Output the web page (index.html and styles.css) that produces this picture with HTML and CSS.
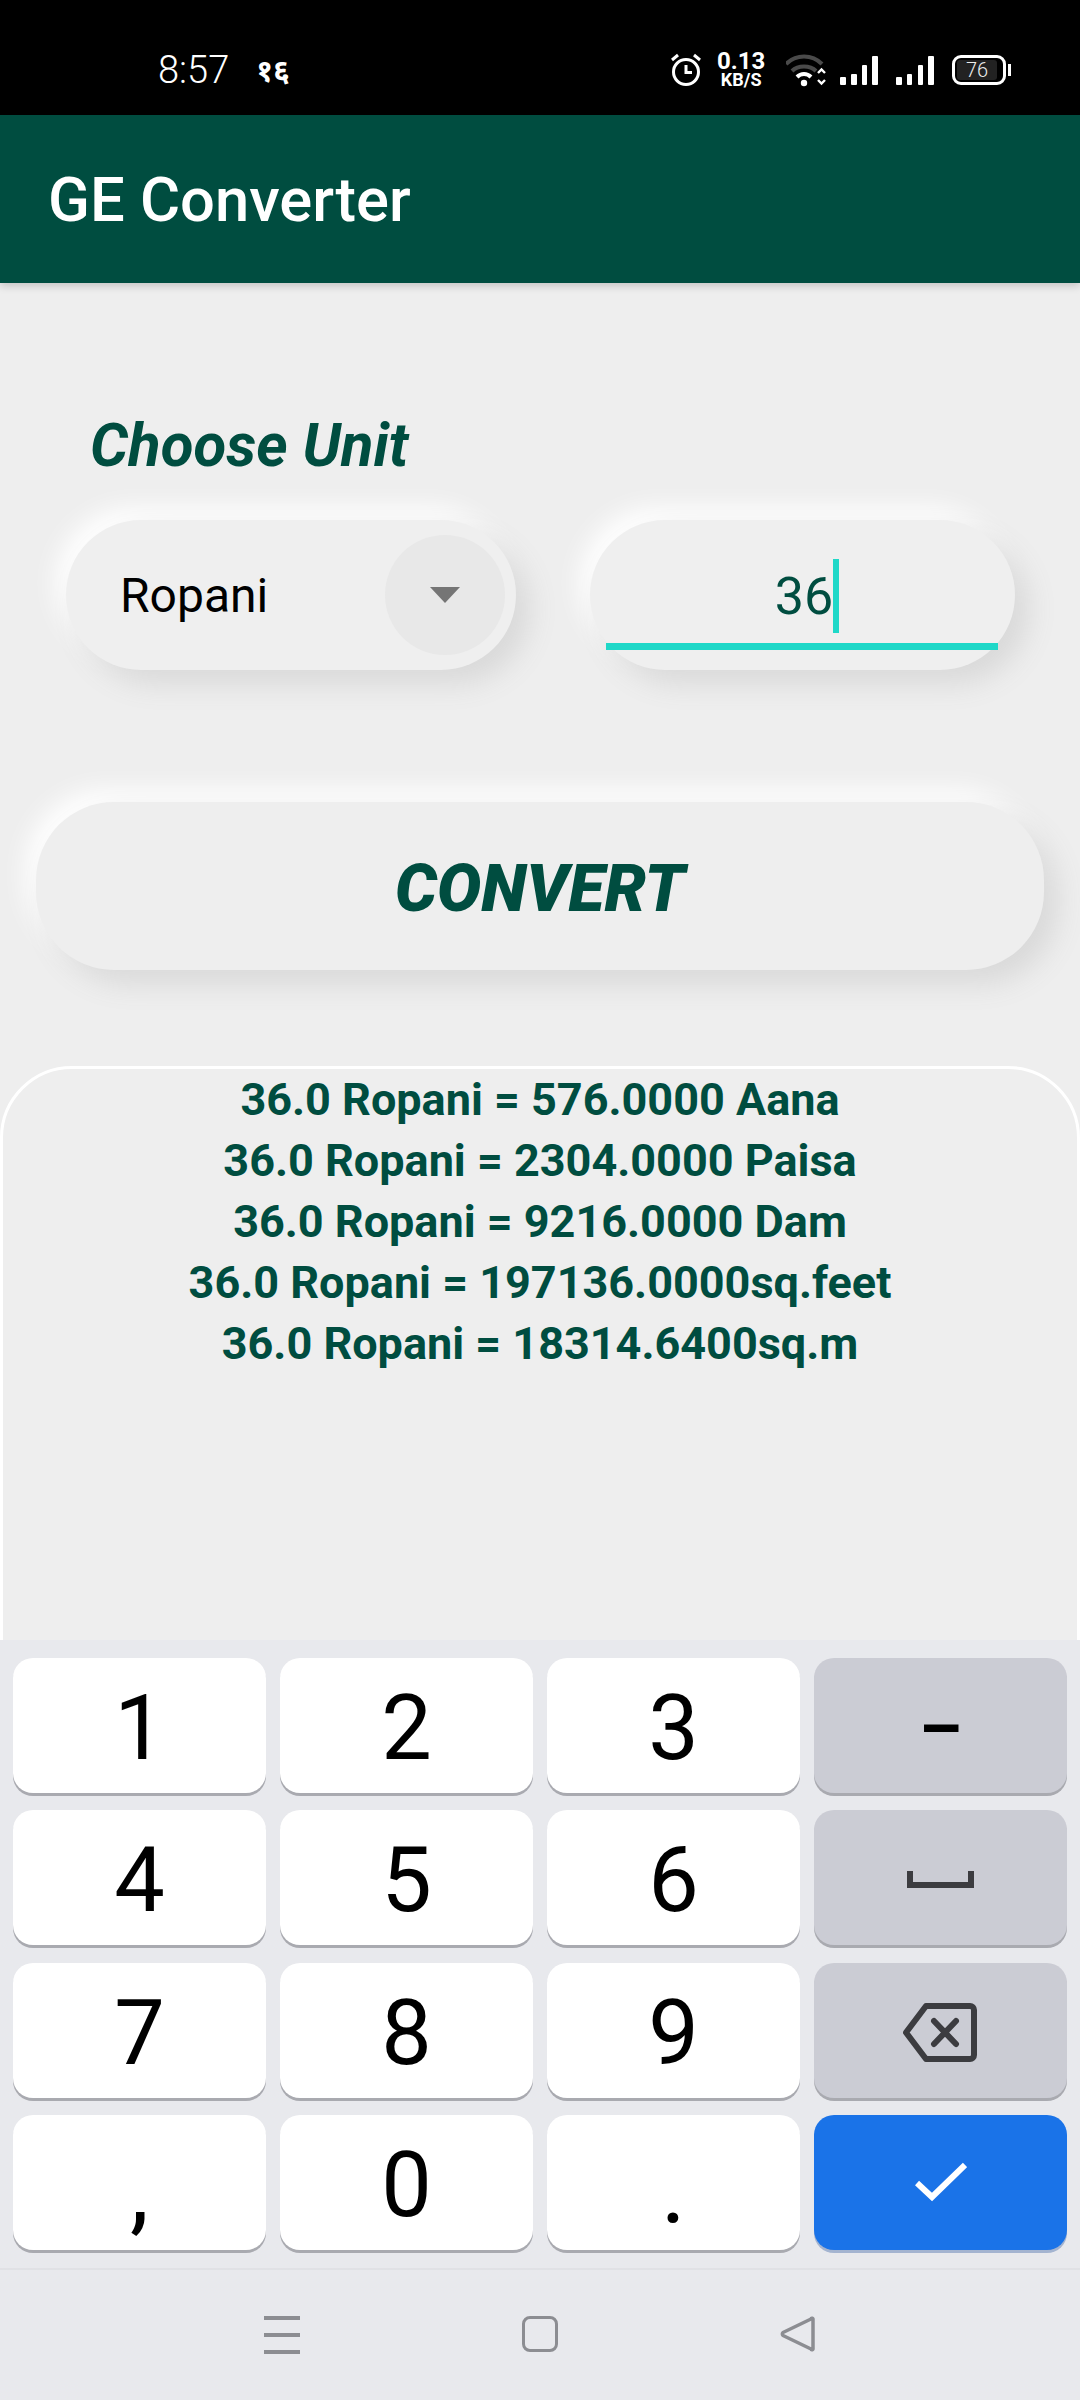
FILE: index.html
```html
<!DOCTYPE html>
<html lang="en">
<head>
  <meta charset="UTF-8" />
  <meta name="viewport" content="width=device-width, initial-scale=1.0"/>
  <title>GE Converter</title>
  <link rel="stylesheet" href="styles.css">
</head>
<body>

  <div class="status-bar">
    <div class="status-left">
      <span class="time">8:57</span>
      <span class="date-hi" lang="hi">१६</span>
    </div>
    <div class="status-right">
      <svg class="ic-alarm" width="32" height="34" viewBox="0 0 32 34">
        <circle cx="16" cy="19" r="12.5" fill="none" stroke="#fff" stroke-width="3"/>
        <path d="M16 12v7.5h6" fill="none" stroke="#fff" stroke-width="3"/>
        <path d="M2 7l6-5M30 7l-6-5" fill="none" stroke="#fff" stroke-width="3"/>
      </svg>
      <div class="speed">
        <span class="speed-num">0.13</span>
        <span class="speed-unit">KB/S</span>
      </div>
      <svg class="ic-wifi" width="42" height="34" viewBox="0 0 42 34">
        <path d="M1 11C11 1 27 1 37 11M7 18c6-6 18-6 24 0" transform="translate(-1 0)" fill="none" stroke="#4a4a4a" stroke-width="4"/>
        <path d="M12 24c4-4 10-4 14 0" transform="translate(-1 0)" fill="none" stroke="#fff" stroke-width="4"/>
        <circle cx="18" cy="30" r="3.2" fill="#fff"/>
        <path d="M32 20l3.5-3.5L39 20M32 27l3.5 3.5L39 27" fill="none" stroke="#fff" stroke-width="2.4"/>
      </svg>
      <div class="signal">
        <i class="b1"></i><i class="b2"></i><i class="b3"></i><i class="b4"></i>
      </div>
      <div class="signal">
        <i class="b1"></i><i class="b2"></i><i class="b3"></i><i class="b4"></i>
      </div>
      <div class="battery">
        <div class="battery-body"><span class="battery-fill">76</span></div>
        <div class="battery-nub"></div>
      </div>
    </div>
  </div>

  <header class="app-bar">GE Converter</header>

  <main class="content">
    <h2 class="choose-label">Choose Unit</h2>

    <div class="input-row">
      <div class="spinner">
        <span class="spinner-text">Ropani</span>
        <div class="spinner-btn"><div class="arrow"></div></div>
      </div>
      <div class="amount">
        <div class="amount-value"><span>36</span><div class="caret"></div></div>
        <div class="amount-line"></div>
      </div>
    </div>

    <button class="convert-btn">CONVERT</button>

    <section class="results">
      <p>36.0 Ropani = 576.0000 Aana</p>
      <p>36.0 Ropani = 2304.0000 Paisa</p>
      <p>36.0 Ropani = 9216.0000 Dam</p>
      <p>36.0 Ropani = 197136.0000sq.feet</p>
      <p>36.0 Ropani = 18314.6400sq.m</p>
    </section>
  </main>

  <div class="keyboard">
    <div class="key">1</div>
    <div class="key">2</div>
    <div class="key">3</div>
    <div class="key key-fn key-dash">–</div>
    <div class="key">4</div>
    <div class="key">5</div>
    <div class="key">6</div>
    <div class="key key-fn key-icon">
      <svg width="67" height="17" viewBox="0 0 67 17"><path d="M3 0v14h61V0" fill="none" stroke="#3c3c40" stroke-width="6"/></svg>
    </div>
    <div class="key">7</div>
    <div class="key">8</div>
    <div class="key">9</div>
    <div class="key key-fn key-icon">
      <svg class="ic-back" width="75" height="59" viewBox="0 0 75 59">
        <path d="M24 3h44a4 4 0 0 1 4 4v45a4 4 0 0 1-4 4H24L4 29.500z" fill="none" stroke="#3c3c40" stroke-width="6" stroke-linejoin="round"/>
        <path d="M32 18l22 23M54 18L32 41" fill="none" stroke="#3c3c40" stroke-width="6" stroke-linecap="round"/>
      </svg>
    </div>
    <div class="key key-mark">,</div>
    <div class="key">0</div>
    <div class="key key-mark">.</div>
    <div class="key key-ok">
      <svg width="52" height="41" viewBox="0 0 52 41"><path d="M2 21l15 14L50 3" fill="none" stroke="#fff" stroke-width="6"/></svg>
    </div>
  </div>

  <nav class="nav-bar">
    <div class="nav-menu"><i></i><i></i><i></i></div>
    <div class="nav-home"></div>
    <svg class="nav-back" width="36" height="36" viewBox="0 0 36 36">
      <path d="M33 3.500a1 1 0 0 0-2-.5L3 16.500a2 2 0 0 0 0 3L31 33a1 1 0 0 0 2-.5z" fill="none" stroke="#8c8d92" stroke-width="3.500" stroke-linejoin="round"/>
    </svg>
  </nav>

</body>
</html>
```

FILE: styles.css
```css
* {
  box-sizing: border-box;
}
body {
  margin: 0;
  width: 1080px;
  height: 2400px;
  overflow: hidden;
  display: flex;
  flex-direction: column;
  font-family: Roboto, "Liberation Sans", sans-serif;
  background: #eee;
}

/* status bar */
.status-bar {
  height: 115px;
  flex: none;
  background: #000;
  color: #fff;
  display: flex;
  justify-content: space-between;
  align-items: center;
  padding: 24px 69px 0 158px;
}
.status-left {
  display: flex;
  align-items: center;
  gap: 27px;
}
.time {
  font-size: 38px;
  font-weight: 300;
}
.date-hi {
  font-family: "Noto Sans", "Noto Sans Devanagari", sans-serif;
  font-size: 30px;
  font-weight: 700;
}
.status-right {
  display: flex;
  align-items: center;
  height: 34px;
}
.ic-alarm {
  margin: 0 16px 0 4px;
}
.speed {
  display: flex;
  flex-direction: column;
  align-items: center;
  font-weight: 700;
  line-height: 1;
  margin-right: 22px;
  width: 46px;
}
.speed-num {
  font-size: 24px;
  line-height: 20px;
}
.speed-unit {
  font-size: 18px;
  line-height: 17px;
}
.ic-wifi {
  margin-right: 12px;
}
.signal {
  display: flex;
  align-items: flex-end;
  gap: 5.2px;
  height: 30px;
  margin-right: 18px;
}
.signal i {
  display: block;
  width: 5.6px;
  background: #fff;
  border-radius: 1px;
}
.b1 { height: 8px; }
.b2 { height: 11px; }
.b3 { height: 20px; }
.b4 { height: 29px; }
.battery {
  display: flex;
  align-items: center;
  gap: 2px;
}
.battery-body {
  width: 54px;
  height: 30px;
  border: 3px solid #fff;
  border-radius: 9px;
  padding: 2px;
}
.battery-fill {
  display: block;
  height: 100%;
  width: 40px;
  background: #222;
  border-radius: 3px;
  color: #eee;
  font-size: 20px;
  font-weight: 300;
  line-height: 20px;
  text-align: center;
}
.battery-nub {
  width: 3px;
  height: 12px;
  background: #fff;
}

/* app bar */
.app-bar {
  height: 168px;
  flex: none;
  background: #004d40;
  color: #fff;
  font-size: 61.500px;
  font-weight: 500;
  display: flex;
  align-items: center;
  padding: 2px 0 0 48px;
  box-shadow: 0 3px 8px rgba(0,0,0,.18);
  position: relative;
}

/* main form */
.content {
  flex: 1;
  min-height: 0;
  overflow: hidden;
  display: flex;
  flex-direction: column;
}
.choose-label {
  margin: 130px 0 0 90px;
  font-size: 60px;
  line-height: 66px;
  font-weight: 700;
  font-style: italic;
  color: #004d40;
}
.input-row {
  display: flex;
  margin: 41px 0 0 66px;
  gap: 74px;
}
.spinner,
.amount {
  height: 150px;
  border-radius: 75px;
  background: #efefef;
  box-shadow: 14px 14px 28px #d9d9d9, -10px -12px 26px #fff;
}
.spinner {
  width: 450px;
  display: flex;
  align-items: center;
  justify-content: space-between;
  padding: 0 11px 0 54px;
}
.spinner-text {
  font-size: 48px;
  color: #000;
}
.spinner-btn {
  width: 120px;
  height: 120px;
  border-radius: 50%;
  background: #e8e8e8;
  display: flex;
  align-items: center;
  justify-content: center;
}
.arrow {
  width: 0;
  height: 0;
  border-left: 15.500px solid transparent;
  border-right: 15.500px solid transparent;
  border-top: 16px solid #757575;
}
.amount {
  width: 425px;
  padding: 36px 17px 0 16px;
}
.amount-value {
  height: 87px;
  display: flex;
  justify-content: center;
  align-items: center;
  padding: 0 0 6px 10px;
  font-size: 52px;
  color: #004d40;
}
.caret {
  width: 6px;
  height: 74px;
  margin-top: -2px;
  background: #1fd8c8;
}
.amount-line {
  height: 7px;
  background: #1fd8c8;
}
.convert-btn {
  display: block;
  flex: none;
  width: 1008px;
  height: 168px;
  margin: 132px 0 0 36px;
  padding: 4px 0 0;
  border: none;
  border-radius: 78px;
  background: #eee;
  box-shadow: 14px 14px 28px #d9d9d9, -10px -12px 26px #fff;
  color: #004d40;
  font-family: inherit;
  font-size: 66px;
  font-weight: 900;
  font-style: italic;
}
.results {
  flex: 1;
  margin-top: 96px;
  min-height: 700px;
  border: 3px solid #fff;
  border-radius: 72px 72px 0 0;
  background: #eee;
  color: #004d40;
  text-align: center;
  font-size: 45px;
  font-weight: 700;
  line-height: 61px;
}
.results p {
  margin: 0;
}

/* keyboard */
.keyboard {
  height: 628px;
  flex: none;
  background: #e8e9ed;
  display: grid;
  grid-template-columns: repeat(4, 253px);
  grid-auto-rows: 135px;
  column-gap: 14px;
  row-gap: 17.300px;
  padding: 18px 13px 0;
  position: relative;
}
.key {
  background: #fff;
  border-radius: 20px;
  box-shadow: 0 3px 0 #a9aab0;
  display: flex;
  align-items: center;
  justify-content: center;
  padding-top: 7px;
  font-size: 90px;
  line-height: 1;
  color: #000;
}
.key-fn {
  background: #cbccd4;
}
.key-dash {
  font-size: 68px;
  font-weight: 700;
}
.key-icon {
  padding-top: 4px;
}
.ic-back {
  margin-left: -3px;
}
.key-mark {
  padding-top: 14px;
  font-size: 96px;
}
.key-ok {
  background: #1a73e8;
  box-shadow: 0 3px 0 #a4b4d0;
  padding-top: 0;
}

/* nav bar */
.nav-bar {
  height: 132px;
  flex: none;
  background: #e8e9ed;
  border-top: 2px solid #e0e1e5;
  display: flex;
  align-items: flex-start;
  padding: 46px 0 0 264px;
}
.nav-menu {
  width: 36px;
  height: 38px;
  display: flex;
  flex-direction: column;
  justify-content: space-between;
  margin-right: 222px;
}
.nav-menu i {
  display: block;
  height: 4px;
  background: #8c8d92;
}
.nav-home {
  width: 36px;
  height: 36px;
  border: 3.500px solid #8c8d92;
  border-radius: 8px;
  margin-right: 222px;
}
```
